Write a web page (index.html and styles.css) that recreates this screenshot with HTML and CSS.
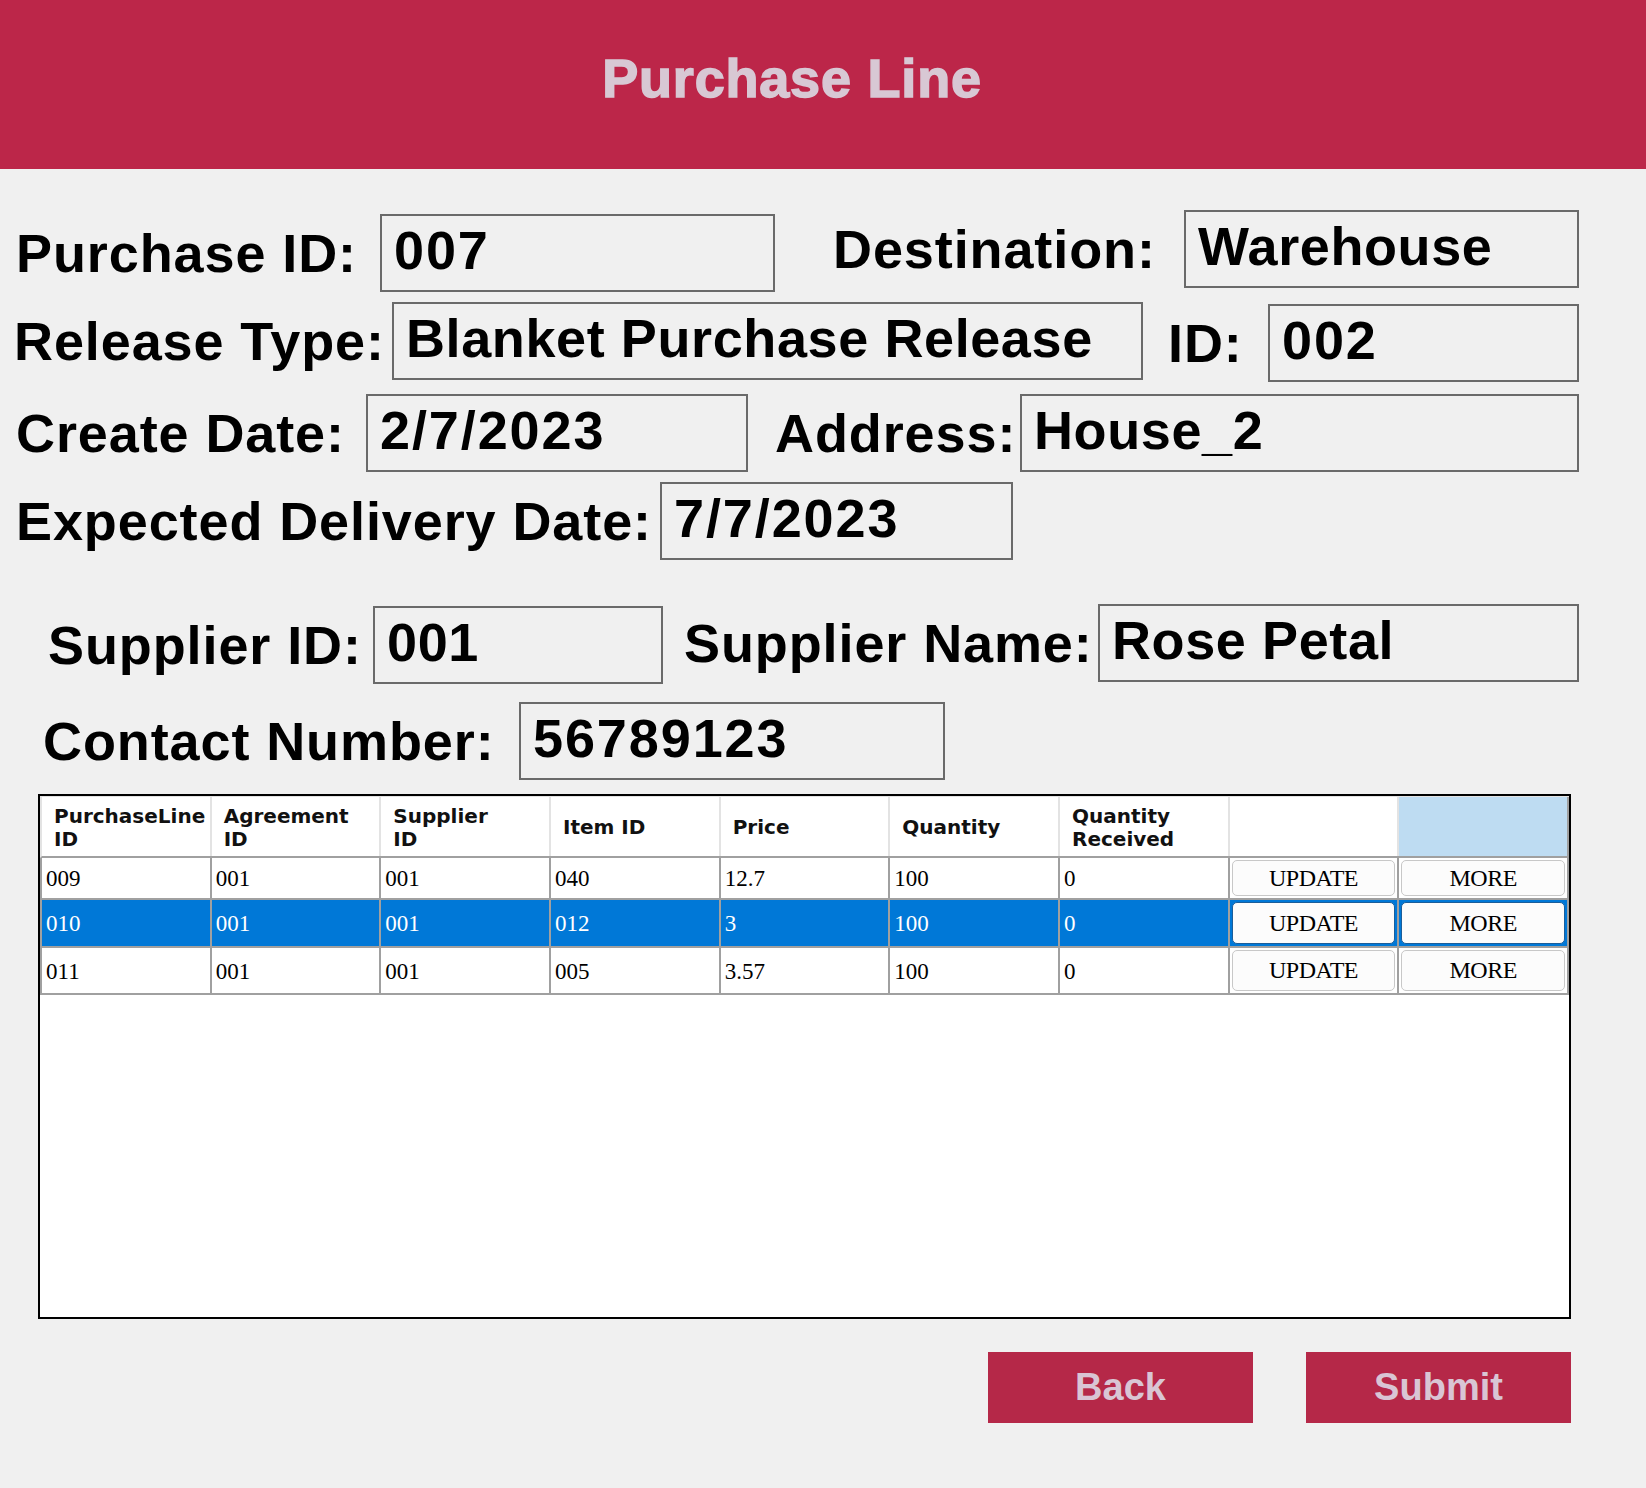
FILE: index.html
```html
<!DOCTYPE html>
<html lang="en">
<head>
<meta charset="utf-8">
<title>Purchase Line</title>
<link rel="stylesheet" href="styles.css">
</head>
<body>
<header class="titlebar">
  <h1 class="title">Purchase Line</h1>
</header>

<main class="form">
  <div class="row row-1">
    <div class="field f-pid"><span class="label lw-pid">Purchase ID:</span><div class="box num bw-pid">007</div></div>
    <div class="field f-dest"><span class="label lw-dest">Destination:</span><div class="box bw-dest">Warehouse</div></div>
  </div>
  <div class="row row-2">
    <div class="field f-rel"><span class="label lw-rel">Release Type:</span><div class="box bw-rel">Blanket Purchase Release</div></div>
    <div class="field f-id"><span class="label lw-id">ID:</span><div class="box num bw-id">002</div></div>
  </div>
  <div class="row row-3">
    <div class="field f-cd"><span class="label lw-cd">Create Date:</span><div class="box num bw-cd">2/7/2023</div></div>
    <div class="field f-addr"><span class="label lw-addr">Address:</span><div class="box bw-addr">House_2</div></div>
  </div>
  <div class="row row-4">
    <div class="field f-edd"><span class="label lw-edd">Expected Delivery Date:</span><div class="box num bw-edd">7/7/2023</div></div>
  </div>
  <div class="row row-5">
    <div class="field f-sid"><span class="label lw-sid">Supplier ID:</span><div class="box bw-sid">001</div></div>
    <div class="field f-sname"><span class="label lw-sname">Supplier Name:</span><div class="box bw-sname">Rose Petal</div></div>
  </div>
  <div class="row row-6">
    <div class="field f-cn"><span class="label lw-cn">Contact Number:</span><div class="box num bw-cn">56789123</div></div>
  </div>

  <div class="grid">
    <div class="grow ghead">
      <div class="hc">PurchaseLine<br>ID</div>
      <div class="hc">Agreement<br>ID</div>
      <div class="hc">Supplier<br>ID</div>
      <div class="hc">Item ID</div>
      <div class="hc">Price</div>
      <div class="hc">Quantity</div>
      <div class="hc">Quantity<br>Received</div>
      <div class="hc"></div>
      <div class="hc hc-hot"></div>
    </div>
    <div class="grow r1">
      <div class="dc">009</div>
      <div class="dc">001</div>
      <div class="dc">001</div>
      <div class="dc">040</div>
      <div class="dc">12.7</div>
      <div class="dc">100</div>
      <div class="dc">0</div>
      <div class="dc bc"><span class="cbtn">UPDATE</span></div>
      <div class="dc bc"><span class="cbtn">MORE</span></div>
    </div>
    <div class="grow r2 sel">
      <div class="dc">010</div>
      <div class="dc">001</div>
      <div class="dc">001</div>
      <div class="dc">012</div>
      <div class="dc">3</div>
      <div class="dc">100</div>
      <div class="dc">0</div>
      <div class="dc bc"><span class="cbtn">UPDATE</span></div>
      <div class="dc bc"><span class="cbtn">MORE</span></div>
    </div>
    <div class="grow r3">
      <div class="dc">011</div>
      <div class="dc">001</div>
      <div class="dc">001</div>
      <div class="dc">005</div>
      <div class="dc">3.57</div>
      <div class="dc">100</div>
      <div class="dc">0</div>
      <div class="dc bc"><span class="cbtn">UPDATE</span></div>
      <div class="dc bc"><span class="cbtn">MORE</span></div>
    </div>
  </div>

  <div class="actions">
    <button class="action">Back</button>
    <button class="action">Submit</button>
  </div>
</main>
</body>
</html>
```

FILE: styles.css
```css
html, body {
  margin: 0;
  padding: 0;
  background: #f0f0f0;
}
body {
  min-height: 1488px;
  font-family: "Liberation Sans", Arial, sans-serif;
}

.titlebar {
  height: 169px;
  background: #bc2649;
  display: flex;
  justify-content: center;
  align-items: flex-start;
  padding-right: 62px;
  box-sizing: border-box;
}
.title {
  margin: 0;
  padding-top: 48px;
  font-family: "Liberation Sans", Arial, sans-serif;
  font-weight: bold;
  font-size: 54px;
  line-height: 60px;
  letter-spacing: 0.8px;
  color: #d8c8d4;
  -webkit-text-stroke: 1.5px #d8c8d4;
}

.form {
  padding-top: 41px;
}

.row {
  display: flex;
  align-items: flex-start;
}
.row-2 { margin-top: 10px; }
.row-3 { margin-top: 12px; }
.row-4 { margin-top: 10px; }
.row-5 { margin-top: 44px; }
.row-6 { margin-top: 18px; }

.field {
  display: flex;
  align-items: flex-start;
}
.label {
  display: block;
  flex: none;
  white-space: nowrap;
  font-weight: bold;
  font-size: 54px;
  line-height: 78px;
  letter-spacing: 0.9px;
  color: #000;
}
.box {
  flex: none;
  box-sizing: border-box;
  height: 78px;
  border: 2px solid #6a6a6a;
  padding: 0 0 6px 12px;
  font-weight: bold;
  font-size: 54px;
  line-height: 68px;
  letter-spacing: 0.6px;
  color: #000;
  white-space: nowrap;
  overflow: hidden;
}
.box.num {
  letter-spacing: 1.9px;
}

/* row 1 */
.f-pid { margin-left: 16px; margin-top: 4px; }
.lw-pid { width: 364px; }
.bw-pid { width: 395px; }
.f-dest { margin-left: 58px; }
.lw-dest { width: 351px; }
.bw-dest { width: 395px; }

/* row 2 */
.f-rel { margin-left: 14px; }
.lw-rel { width: 378px; }
.bw-rel { width: 751px; }
.f-id { margin-left: 25px; margin-top: 2px; }
.lw-id { width: 100px; }
.bw-id { width: 311px; }

/* row 3 */
.f-cd { margin-left: 16px; }
.lw-cd { width: 350px; }
.bw-cd { width: 382px; }
.f-addr { margin-left: 27px; }
.lw-addr { width: 245px; }
.bw-addr { width: 559px; }

/* row 4 */
.f-edd { margin-left: 16px; }
.lw-edd { width: 644px; }
.bw-edd { width: 353px; }

/* row 5 */
.f-sid { margin-left: 48px; margin-top: 2px; }
.lw-sid { width: 325px; }
.bw-sid { width: 290px; }
.f-sname { margin-left: 21px; }
.lw-sname { width: 414px; }
.bw-sname { width: 481px; }

/* row 6 */
.f-cn { margin-left: 43px; }
.lw-cn { width: 476px; }
.bw-cn { width: 426px; }

/* data grid */
.grid {
  margin-top: 14px;
  margin-left: 38px;
  width: 1533px;
  height: 525px;
  box-sizing: border-box;
  border: 2px solid #000;
  background: #fff;
}
.grow {
  display: grid;
  grid-template-columns: repeat(9, 1fr);
  border-left: 2px solid #a0a0a0;
  border-bottom: 2px solid #a0a0a0;
}
.ghead {
  height: 62px;
  box-sizing: border-box;
  border-top: 1px solid #e3e3e3;
  border-left-color: #e3e3e3;
}
.r1 { height: 40px; }
.r2 { height: 46px; }
.r3 { height: 45px; }

.hc {
  display: flex;
  align-items: center;
  padding-left: 12px;
  padding-top: 2px;
  border-right: 2px solid #e3e3e3;
  font-family: "DejaVu Sans", Verdana, sans-serif;
  font-weight: bold;
  font-size: 20px;
  line-height: 23px;
  color: #111;
  white-space: nowrap;
  overflow: hidden;
}
.hc-hot {
  background: #bedcf2;
  border-right-color: #a0a0a0;
}

.dc {
  display: flex;
  align-items: center;
  padding-left: 4px;
  padding-top: 2px;
  border-right: 2px solid #a0a0a0;
  font-family: "Liberation Serif", "Times New Roman", serif;
  font-size: 23px;
  color: #000;
  white-space: nowrap;
  overflow: hidden;
}
.sel { background: #0078d7; }
.sel .dc { color: #fff; }

.dc.bc {
  padding: 2px;
  align-items: stretch;
}
.cbtn {
  flex: 1;
  display: flex;
  align-items: center;
  justify-content: center;
  box-sizing: border-box;
  border: 1px solid #c8c8c8;
  border-radius: 5px;
  background: #fcfcfc;
  font-family: "Liberation Serif", "Times New Roman", serif;
  font-size: 24px;
  letter-spacing: -0.5px;
  color: #000;
}
.sel .cbtn {
  border-color: #1b5e9a;
  color: #000;
}

.actions {
  display: flex;
  justify-content: flex-end;
  gap: 53px;
  width: 1571px;
  margin-top: 33px;
}
.action {
  width: 265px;
  height: 71px;
  border: none;
  border-radius: 0;
  padding: 0 0 0 0;
  background: #b52848;
  color: #d9c5d4;
  font-family: "Liberation Sans", Arial, sans-serif;
  font-weight: bold;
  font-size: 38px;
  line-height: 71px;
}
```
